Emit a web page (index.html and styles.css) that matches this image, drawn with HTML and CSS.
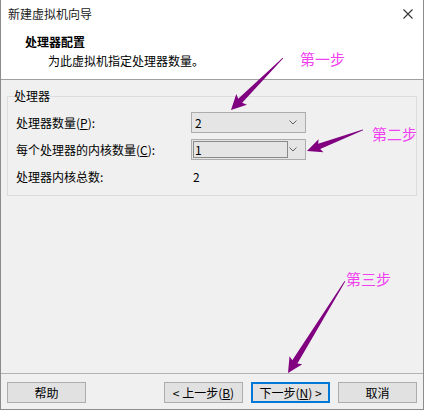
FILE: index.html
```html
<!DOCTYPE html>
<html lang="zh-CN">
<head>
<meta charset="utf-8">
<link rel="stylesheet" href="styles.css">
</head>
<body>
<div class="window">
  <div class="titlebar">
    <span class="title">新建虚拟机向导</span>
    <svg class="close" width="10" height="10" viewBox="0 0 10 10"><path d="M0.5 0.5L9.5 9.5M9.5 0.5L0.5 9.5" stroke="#333" stroke-width="1.1" fill="none"/></svg>
  </div>
  <div class="header">
    <div class="h-title">处理器配置</div>
    <div class="h-sub">为此虚拟机指定处理器数量。</div>
  </div>
  <div class="body">
    <fieldset class="group">
      <legend>处理器</legend>
      <div class="rows">
        <label class="lbl">处理器数量(<u>P</u>):</label>
        <div class="combo"><span class="val">2</span><svg class="chev" width="8" height="5" viewBox="0 0 8 5"><path d="M0.5 0.5L4 4L7.5 0.5" stroke="#606060" fill="none"/></svg></div>
        <label class="lbl">每个处理器的内核数量(<u>C</u>):</label>
        <div class="combo focus"><span class="val inner">1</span><svg class="chev" width="8" height="5" viewBox="0 0 8 5"><path d="M0.5 0.5L4 4L7.5 0.5" stroke="#606060" fill="none"/></svg></div>
        <span class="lbl">处理器内核总数:</span>
        <span class="total">2</span>
      </div>
    </fieldset>
  </div>
  <div class="footer">
    <button class="btn">帮助</button>
    <div class="spacer"></div>
    <button class="btn">&lt; 上一步(<u>B</u>)</button>
    <button class="btn default">下一步(<u>N</u>) &gt;</button>
    <button class="btn">取消</button>
  </div>

  <svg class="overlay" width="424" height="410" viewBox="0 0 424 410">
    <g fill="#800080">
      <g transform="translate(231,110) rotate(135)">
        <polygon points="-73.5,-0.4 -13,-2.8 -15,-7.5 0,0 -15,7.5 -13,2.8 -73.5,0.4"/>
      </g>
      <g transform="translate(307,151) rotate(159.4)">
        <polygon points="-59.8,-0.4 -13,-2.8 -15,-7 0,0 -15,7 -13,2.8 -59.8,0.4"/>
      </g>
      <g transform="translate(288,373) rotate(121.8)">
        <polygon points="-108,-0.4 -13,-3 -15,-7.5 0,0 -15,7.5 -13,3 -108,0.4"/>
      </g>
    </g>
  </svg>
  <span class="note n1">第一步</span>
  <span class="note n2">第二步</span>
  <span class="note n3">第三步</span>
</div>
</body>
</html>
```

FILE: styles.css
```css
* { box-sizing: border-box; }
html, body { margin: 0; padding: 0; background: #ffffff; }
body {
  font-family: "Noto Sans CJK SC", "Microsoft YaHei", sans-serif;
  font-size: 12px;
  color: #000;
}
.window {
  position: relative;
  width: 424px;
  height: 410px;
  display: flex;
  flex-direction: column;
  border-left: 1px solid #8c8c8c;
  border-right: 1px solid #8c8c8c;
  border-bottom: 1px solid #8c8c8c;
  background: #f0f0f0;
  overflow: hidden;
}
.titlebar {
  height: 28px;
  background: #fff;
  display: flex;
  align-items: center;
  justify-content: space-between;
  padding: 0 10px 0 7px;
}
.title { line-height: 14px; color: #1a1a1a; }
.close { display: block; margin-top: -1px; }
.header {
  height: 52px;
  background: #fff;
  padding: 7px 0 0 24px;
  border-bottom: 1px solid #a0a0a0;
}
.h-title { font-weight: bold; line-height: 14px; }
.h-sub { line-height: 14px; margin-top: 5px; padding-left: 23px; }
.body { flex: 1; padding: 9px 6px 0 6px; }
.group {
  margin: 0;
  border: 1px solid #dcdcdc;
  padding: 9px 6px 8px 6px;
}
.group legend {
  padding: 0;
  line-height: 14px;
}
.rows {
  display: grid;
  grid-template-columns: 175px 115px;
  grid-auto-rows: 21px;
  row-gap: 6px;
  align-items: center;
  margin-left: 2px;
}
.lbl { line-height: 14px; }
.lbl u, .btn u { text-decoration: underline; text-underline-offset: 1px; }
.combo {
  height: 21px;
  background: #e5e5e5;
  border: 1px solid #adadad;
  display: flex;
  align-items: center;
  justify-content: space-between;
  padding: 0 8px 0 3px;
}
.combo .val { line-height: 14px; }
.combo.focus { padding-left: 1px; }
.combo .inner {
  width: 95px;
  height: 17px;
  border: 1px solid #8a8a8a;
  padding-left: 1px;
  line-height: 15px;
}
.total { padding-left: 2px; line-height: 14px; }
.footer {
  height: 36px;
  border-top: 1px solid #b4b4b4;
  display: flex;
  align-items: flex-start;
  padding: 8px 6px 0 6px;
  gap: 8px;
}
.spacer { flex: 1; }
.btn {
  width: 79px;
  height: 21px;
  background: #e1e1e1;
  border: 1px solid #adadad;
  font-family: inherit;
  font-size: 12px;
  line-height: 14px;
  padding: 0;
  color: #000;
}
.btn.default {
  border: 1px solid #0078d7;
  box-shadow: inset 0 0 0 1px #0078d7;
}
.overlay { position: absolute; left: -1px; top: 0; pointer-events: none; }
.note {
  position: absolute;
  color: #f040f0;
  font-size: 15px;
  line-height: 18px;
}
.n1 { left: 299px; top: 50px; }
.n2 { left: 371px; top: 125px; }
.n3 { left: 345px; top: 270px; }
```
